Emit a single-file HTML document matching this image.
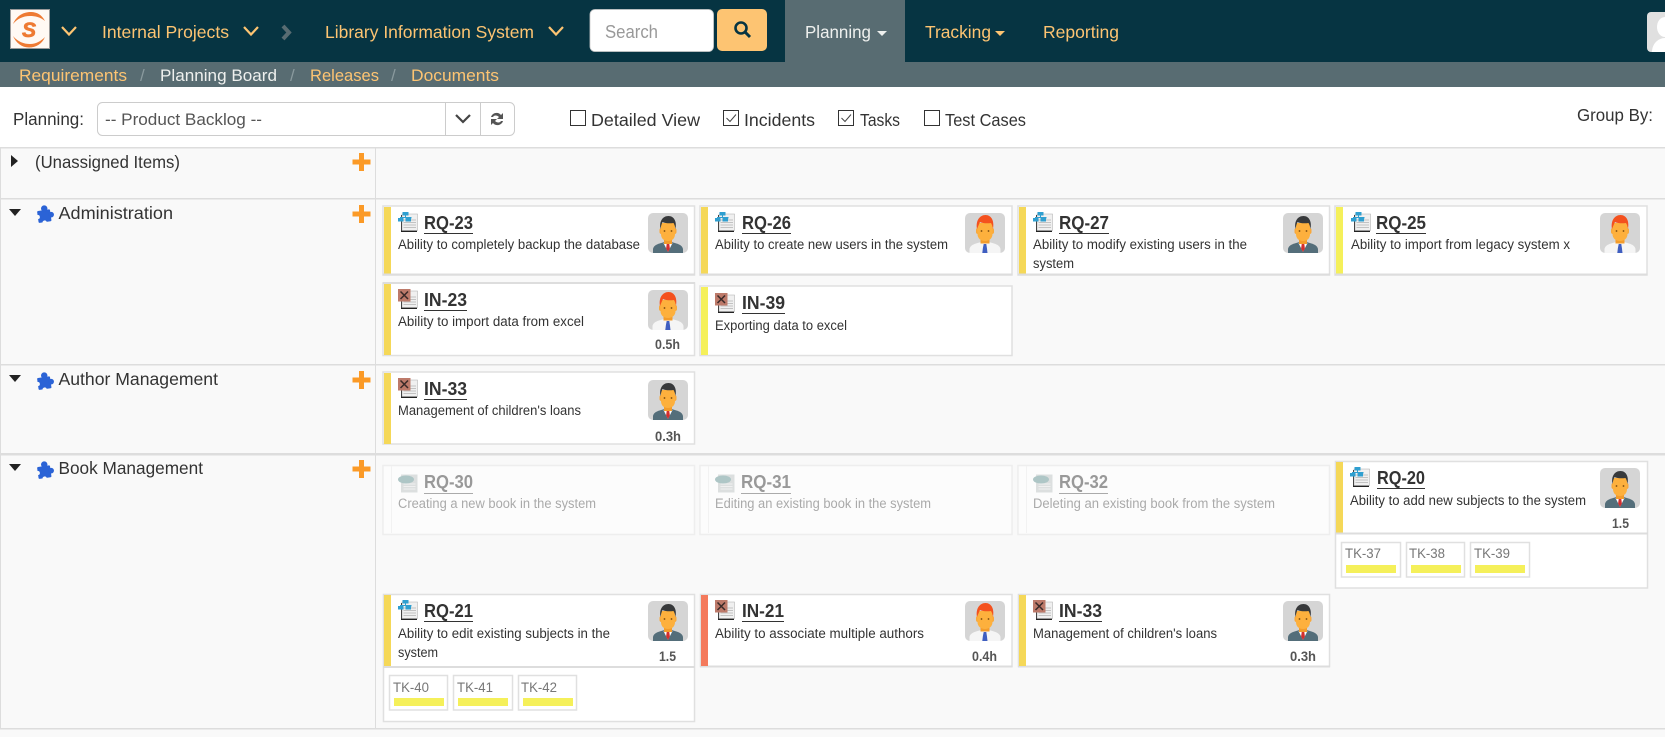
<!DOCTYPE html>
<html lang="en">
<head>
<meta charset="utf-8">
<title>Planning Board</title>
<style>
html,body{margin:0;padding:0;background:#fff;width:1665px;height:737px;overflow:hidden}
svg{display:block}
text{font-family:"Liberation Sans",sans-serif;fill:#333}
.nav{font-size:17.5px;fill:#fdc472}
.sub{font-size:17px;fill:#fdc472}
.lab{font-size:17.5px;fill:#333}
.t{font-size:18px;font-weight:700;fill:#333}
.d{font-size:13.5px;fill:#333}
.e{font-size:13.5px;font-weight:700;fill:#555}
.gt{font-size:18px;font-weight:700;fill:#999}
.gd{font-size:13.5px;fill:#aaa}
.k{font-size:14px;fill:#777}
.c{fill:#fff;stroke:#e0e0e0;stroke-width:1.5}
.g{fill:#fcfcfc;stroke:#eee;stroke-width:1.5}
.b{fill:#ddd}
.u{fill:#333}
.y{fill:#f5d858}
.l{fill:#f5f05a}
</style>
</head>
<body>
<svg width="1665" height="737" viewBox="0 0 1665 737" xmlns="http://www.w3.org/2000/svg">
<defs>
<symbol id="doc" viewBox="0 0 20 20">
<rect x="3" y="3" width="16" height="17" fill="#222"/>
<rect x="4" y="2" width="15.500" height="16.500" fill="#f0f0f0" stroke="#aaa" stroke-width=".5"/>
<path d="M5.500 8h12.500M5.500 10.500h12.500M5.500 13h12.500M5.500 15.500h12.500" stroke="#c2c2c2" stroke-width="1"/>
</symbol>
<symbol id="rq" viewBox="0 0 20 20">
<use href="#doc" width="20" height="20"/>
<path d="M7.500 3v2.500M2.500 6.500V5.500h10.500v1" fill="none" stroke="#2f9fd0" stroke-width="1"/>
<rect x="4.500" y="0" width="6" height="3.500" fill="#2f9fd0"/>
<rect x="0" y="6" width="5.500" height="3.500" fill="#2f9fd0"/>
<rect x="7.500" y="6" width="5.500" height="3.500" fill="#2f9fd0"/>
</symbol>
<symbol id="in" viewBox="0 0 20 20">
<use href="#doc" width="20" height="20"/>
<rect x="0" y="0" width="12.500" height="12.500" fill="#bd7a6a"/>
<path d="M2.500 2.500l7.500 7.500M10 2.500l-7.500 7.500" stroke="#3a2a28" stroke-width="1.500"/>
</symbol>
<symbol id="gh" viewBox="0 0 20 20">
<rect x="3" y="1.500" width="16.500" height="18" fill="#dcdfdf"/>
<path d="M5.500 11h12M5.500 13.500h12M5.500 16h12" stroke="#f0f0f0" stroke-width="1"/>
<ellipse cx="8" cy="6.500" rx="8" ry="4" fill="#aec6c6"/>
</symbol>
<symbol id="m1" viewBox="0 0 40 40">
<rect width="40" height="40" rx="5" fill="#d5d5d5"/>
<path d="M5 40v-3.500c0-3 3-5 6.500-6l5-1.500h7l5 1.500c3.500 1 6.500 3 6.500 6V40z" fill="#546e7a"/>
<path d="M15.500 30l4.500 9 4.500-9z" fill="#fff"/>
<path d="M18.700 31h2.600l.6 4.500-1.900 3.500-1.900-3.500z" fill="#d32f2f"/>
<rect x="16" y="24" width="8" height="7" fill="#f39c2b"/>
<rect x="11.500" y="15" width="17" height="6" rx="2" fill="#f9a83a"/>
<path d="M13 10h14v11c0 4.500-3 7-7 7s-7-2.500-7-7z" fill="#fdb03d"/>
<path d="M12.500 16c-1.500-7.500 2-13 8-13 5.500 0 8.500 5.500 7 13-.4-2.500-1-4.500-2-6-3.500.5-8 .5-11-1-1 2-1.600 4.500-2 7z" fill="#37393b"/>
<circle cx="16.500" cy="18" r=".9" fill="#7a4a10"/><circle cx="23.500" cy="18" r=".9" fill="#7a4a10"/>
</symbol>
<symbol id="m2" viewBox="0 0 40 40">
<rect width="40" height="40" rx="5" fill="#d5d5d5"/>
<path d="M4.500 40v-3.500c0-3 3-5 6.500-6l5-1.500h8l5 1.500c3.500 1 6.500 3 6.500 6V40z" fill="#f5f5f5"/>
<path d="M18.700 31h2.600l.6 4 .6 5h-5.200l.6-5z" fill="#3f5ec0"/>
<rect x="15.500" y="24" width="9" height="6.500" fill="#f39c2b"/>
<rect x="11" y="15" width="18" height="6" rx="2" fill="#f9a83a"/>
<path d="M12.500 10h15v11c0 4.500-3.500 7-7.500 7s-7.500-2.500-7.500-7z" fill="#fdb03d"/>
<path d="M12 16c-1.500-8 2.500-14 8.500-14 6 0 9 6 7.500 14-.4-2.500-1-4.500-2-6-3.500.5-8 .5-11-1-1 2-2 4.500-3 7z" fill="#f4511e"/>
<circle cx="16.500" cy="18" r=".9" fill="#7a4a10"/><circle cx="23.500" cy="18" r=".9" fill="#7a4a10"/>
</symbol>
<symbol id="pz" viewBox="0 0 18 18">
<g transform="rotate(-8 9 9)">
<rect x="1.500" y="5" width="13" height="12" rx="1" fill="#2b63d6"/>
<circle cx="9" cy="3.500" r="3.200" fill="#2b63d6"/>
<circle cx="15" cy="10.500" r="2.800" fill="#2b63d6"/>
<circle cx="1.500" cy="11" r="2" fill="#f9f9f9"/>
<circle cx="7.500" cy="17.500" r="2.200" fill="#f9f9f9"/>
</g>
</symbol>
<symbol id="plus" viewBox="0 0 18 18">
<path d="M6.500 0h5v6.500H18v5h-6.500V18h-5v-6.500H0v-5h6.500z" fill="#fb9a27"/>
</symbol>
</defs>

<!-- header -->
<rect width="1665" height="62" fill="#063442"/>
<rect y="62" width="1665" height="25" fill="#586c72"/>
<rect x="785" width="120" height="62" fill="#586c72"/>

<rect x="10.500" y="9.500" width="39" height="39" fill="#fff9f4" stroke="#999" stroke-width="1"/>
<path d="M13 24C17 15 24 12 31 12C37 12 42 15 45 21C40 17 35 16 30 16C23 16 17 19 13 24z" fill="#ee7a33"/>
<path d="M13 36C18 42 24 44 30 44C36 44 41 41 45 37C42 44 36 47.500 29 47.500C22 47.500 16 43 13 36z" fill="#ee7a33"/>
<text x="22" y="37" style="font-size:21px;font-weight:700;font-style:italic;fill:#ee7a33;stroke:#ee7a33;stroke-width:.7">S</text>
<path d="M62 27l7 7.500 7-7.500" fill="none" stroke="#fdc472" stroke-width="2.200"/>

<text class="nav" x="102" y="38" textLength="127" lengthAdjust="spacingAndGlyphs">Internal Projects</text>
<path d="M244 27l7 7.500 7-7.500" fill="none" stroke="#fdc472" stroke-width="2.200"/>
<path d="M283 26l6 6.500-6 6.500" fill="none" stroke="#586c72" stroke-width="4"/>
<text class="nav" x="325" y="38" textLength="209" lengthAdjust="spacingAndGlyphs">Library Information System</text>
<path d="M549 27l7 7.500 7-7.500" fill="none" stroke="#fdc472" stroke-width="2.200"/>

<rect x="590" y="9.500" width="123.500" height="42" rx="5" fill="#fff" stroke="#ccc" stroke-width=".8"/>
<text x="605" y="38" textLength="53" lengthAdjust="spacingAndGlyphs" style="font-size:18px;fill:#999">Search</text>
<rect x="717" y="9" width="50" height="42" rx="5" fill="#fdc472"/>
<circle cx="741" cy="28" r="5.500" fill="none" stroke="#063442" stroke-width="2.600"/>
<path d="M745 32l5 5" stroke="#063442" stroke-width="3"/>

<text x="805" y="38" textLength="66" lengthAdjust="spacingAndGlyphs" style="font-size:17.5px;fill:#eef0ee">Planning</text>
<path d="M877 31h10l-5 5z" fill="#eef0ee"/>
<text class="nav" x="925" y="38" textLength="66" lengthAdjust="spacingAndGlyphs">Tracking</text>
<path d="M995 31h10l-5 5z" fill="#fdc472"/>
<text class="nav" x="1043" y="38" textLength="76" lengthAdjust="spacingAndGlyphs">Reporting</text>

<rect x="1647" y="12" width="30" height="40" rx="4" fill="#e0e0e0"/>
<ellipse cx="1665" cy="27" rx="8" ry="10" fill="#fff"/>
<path d="M1652 52c0-8 6-14 13-14v14z" fill="#fff"/>

<!-- subnav -->
<text class="sub" x="19" y="81" textLength="108" lengthAdjust="spacingAndGlyphs">Requirements</text>
<text x="140" y="81" style="font-size:17px;fill:#8a9a9e">/</text>
<text x="160" y="81" textLength="117" lengthAdjust="spacingAndGlyphs" style="font-size:17px;fill:#eef0ee">Planning Board</text>
<text x="290" y="81" style="font-size:17px;fill:#8a9a9e">/</text>
<text class="sub" x="310" y="81" textLength="69" lengthAdjust="spacingAndGlyphs">Releases</text>
<text x="391" y="81" style="font-size:17px;fill:#8a9a9e">/</text>
<text class="sub" x="411" y="81" textLength="88" lengthAdjust="spacingAndGlyphs">Documents</text>

<!-- toolbar -->
<text class="lab" x="13" y="125" textLength="71" lengthAdjust="spacingAndGlyphs">Planning:</text>
<rect x="97.500" y="102.500" width="417" height="33" rx="5" fill="#fff" stroke="#ccc"/>
<path d="M445.500 103v32M480.500 103v32" stroke="#ccc"/>
<text x="105" y="125" textLength="157" lengthAdjust="spacingAndGlyphs" style="font-size:17px;fill:#555">-- Product Backlog --</text>
<path d="M456 115l7 7 7-7" fill="none" stroke="#444" stroke-width="2.200"/>
<path d="M491 117c1-4 7-6 10-2l2-2v6h-6l2-2c-2-2-5-2-6 0zM503 121c-1 4-7 6-10 2l-2 2v-6h6l-2 2c2 2 5 2 6 0z" fill="#555"/>

<rect x="570.500" y="110.500" width="15" height="15" fill="#fff" stroke="#333"/>
<text class="lab" x="591" y="126" textLength="109" lengthAdjust="spacingAndGlyphs">Detailed View</text>
<rect x="723.500" y="110.500" width="15" height="15" fill="#fff" stroke="#333"/>
<path d="M726.500 118l3.500 3.500 6-7" fill="none" stroke="#444" stroke-width="1"/>
<text class="lab" x="744" y="126" textLength="71" lengthAdjust="spacingAndGlyphs">Incidents</text>
<rect x="838.500" y="110.500" width="15" height="15" fill="#fff" stroke="#333"/>
<path d="M841.500 118l3.500 3.500 6-7" fill="none" stroke="#444" stroke-width="1"/>
<text class="lab" x="860" y="126" textLength="40" lengthAdjust="spacingAndGlyphs">Tasks</text>
<rect x="924.500" y="110.500" width="15" height="15" fill="#fff" stroke="#333"/>
<text class="lab" x="945" y="126" textLength="81" lengthAdjust="spacingAndGlyphs">Test Cases</text>
<text class="lab" x="1577" y="121" textLength="76" lengthAdjust="spacingAndGlyphs">Group By:</text>

<!-- table -->
<rect y="147" width="1665" height="590" fill="#f9f9f9"/>
<rect y="147" width="1665" height="1.500" class="b"/>
<rect y="198" width="1665" height="1.500" class="b"/>
<rect y="364" width="1665" height="1.500" class="b"/>
<rect y="453" width="1665" height="2.500" class="b"/>
<rect y="728" width="1665" height="1.500" class="b"/>
<rect x="0" y="147" width="1" height="582" class="b"/>
<rect x="375" y="147" width="1" height="582" class="b"/>

<path d="M11 155l7 6-7 6z" fill="#222"/>
<text class="lab" x="35" y="168" textLength="145" lengthAdjust="spacingAndGlyphs">(Unassigned Items)</text>
<use href="#plus" x="352.500" y="153" width="18" height="18"/>

<path d="M9 209h12l-6 7z" fill="#222"/>
<use href="#pz" x="36" y="205" width="18" height="18"/>
<text class="lab" x="58.500" y="219" textLength="114.500" lengthAdjust="spacingAndGlyphs">Administration</text>
<use href="#plus" x="352.500" y="205" width="18" height="18"/>

<path d="M9 375h12l-6 7z" fill="#222"/>
<use href="#pz" x="36" y="372" width="18" height="18"/>
<text class="lab" x="58.500" y="385" textLength="159.500" lengthAdjust="spacingAndGlyphs">Author Management</text>
<use href="#plus" x="352.500" y="371" width="18" height="18"/>

<path d="M9 464h12l-6 7z" fill="#222"/>
<use href="#pz" x="36" y="461" width="18" height="18"/>
<text class="lab" x="58.500" y="474" textLength="144.500" lengthAdjust="spacingAndGlyphs">Book Management</text>
<use href="#plus" x="352.500" y="460" width="18" height="18"/>

<!-- RQ-23 -->
<rect class="c" x="383" y="206" width="311.500" height="69"/><rect class="b" x="383" y="273.500" width="312" height="2"/>
<rect class="y" x="384" y="207" width="7" height="66.500"/>
<use href="#rq" x="398" y="212" width="20" height="20"/>
<text class="t" x="424" y="229" textLength="49" lengthAdjust="spacingAndGlyphs">RQ-23</text><rect class="u" x="424" y="233" width="49" height="1"/>
<text class="d" x="398" y="249" textLength="242" lengthAdjust="spacingAndGlyphs">Ability to completely backup the database</text>
<use href="#m1" x="648" y="213" width="40" height="40"/>

<!-- RQ-26 -->
<rect class="c" x="700" y="206" width="312" height="69"/><rect class="b" x="700" y="273.500" width="312.500" height="2"/>
<rect class="y" x="701" y="207" width="7" height="66.500"/>
<use href="#rq" x="715" y="212" width="20" height="20"/>
<text class="t" x="742" y="229" textLength="49" lengthAdjust="spacingAndGlyphs">RQ-26</text><rect class="u" x="742" y="233" width="49" height="1"/>
<text class="d" x="715" y="249" textLength="233" lengthAdjust="spacingAndGlyphs">Ability to create new users in the system</text>
<use href="#m2" x="965" y="213" width="40" height="40"/>

<!-- RQ-27 -->
<rect class="c" x="1018" y="206" width="311.500" height="69"/><rect class="b" x="1018" y="273.500" width="312" height="2"/>
<rect class="y" x="1019" y="207" width="7" height="66.500"/>
<use href="#rq" x="1033" y="212" width="20" height="20"/>
<text class="t" x="1059" y="229" textLength="50" lengthAdjust="spacingAndGlyphs">RQ-27</text><rect class="u" x="1059" y="233" width="50" height="1"/>
<text class="d" x="1033" y="249" textLength="214" lengthAdjust="spacingAndGlyphs">Ability to modify existing users in the</text>
<text class="d" x="1033" y="268" textLength="41" lengthAdjust="spacingAndGlyphs">system</text>
<use href="#m1" x="1283" y="213" width="40" height="40"/>

<!-- RQ-25 -->
<rect class="c" x="1335" y="206" width="312" height="69"/><rect class="b" x="1335" y="273.500" width="312.500" height="2"/>
<rect class="l" x="1336" y="207" width="7" height="66.500"/>
<use href="#rq" x="1351" y="212" width="20" height="20"/>
<text class="t" x="1376" y="229" textLength="50" lengthAdjust="spacingAndGlyphs">RQ-25</text><rect class="u" x="1376" y="233" width="50" height="1"/>
<text class="d" x="1351" y="249" textLength="219" lengthAdjust="spacingAndGlyphs">Ability to import from legacy system x</text>
<use href="#m2" x="1600" y="213" width="40" height="40"/>

<!-- IN-23 -->
<rect class="c" x="383" y="283" width="311.500" height="72.500"/><rect class="b" x="383" y="282" width="312" height="2"/>
<rect class="y" x="384" y="284" width="7" height="71"/>
<use href="#in" x="398" y="289" width="20" height="20"/>
<text class="t" x="424" y="306" textLength="43" lengthAdjust="spacingAndGlyphs">IN-23</text><rect class="u" x="424" y="310" width="43" height="1"/>
<text class="d" x="398" y="326" textLength="186" lengthAdjust="spacingAndGlyphs">Ability to import data from excel</text>
<use href="#m2" x="648" y="290" width="40" height="40"/>
<text class="e" x="655" y="349" textLength="25" lengthAdjust="spacingAndGlyphs">0.5h</text>

<!-- IN-39 -->
<rect class="c" x="700" y="286" width="312" height="69.500"/>
<rect class="l" x="701" y="287" width="7" height="68"/>
<use href="#in" x="715" y="293" width="20" height="20"/>
<text class="t" x="742" y="309" textLength="43" lengthAdjust="spacingAndGlyphs">IN-39</text><rect class="u" x="742" y="313" width="43" height="1"/>
<text class="d" x="715" y="330" textLength="132" lengthAdjust="spacingAndGlyphs">Exporting data to excel</text>

<!-- IN-33 author -->
<rect class="c" x="383" y="372" width="311.500" height="72"/>
<rect class="y" x="384" y="373" width="7" height="71"/>
<use href="#in" x="398" y="378" width="20" height="20"/>
<text class="t" x="424" y="395" textLength="43" lengthAdjust="spacingAndGlyphs">IN-33</text><rect class="u" x="424" y="399" width="43" height="1"/>
<text class="d" x="398" y="415" textLength="183" lengthAdjust="spacingAndGlyphs">Management of children's loans</text>
<use href="#m1" x="648" y="380" width="40" height="40"/>
<text class="e" x="655" y="441" textLength="26" lengthAdjust="spacingAndGlyphs">0.3h</text>

<!-- ghosts -->
<rect class="g" x="383" y="465.500" width="311.500" height="69"/><rect x="391" y="466" width="1" height="67" fill="#f2f2f2"/>
<use href="#gh" x="398" y="473" width="20" height="20"/>
<text class="gt" x="424" y="488" textLength="49" lengthAdjust="spacingAndGlyphs">RQ-30</text><rect x="424" y="493" width="49" height="1" fill="#aaa"/>
<text class="gd" x="398" y="508" textLength="198" lengthAdjust="spacingAndGlyphs">Creating a new book in the system</text>

<rect class="g" x="700" y="465.500" width="312" height="69"/><rect x="708" y="466" width="1" height="67" fill="#f2f2f2"/>
<use href="#gh" x="715" y="473" width="20" height="20"/>
<text class="gt" x="741" y="488" textLength="50" lengthAdjust="spacingAndGlyphs">RQ-31</text><rect x="741" y="493" width="50" height="1" fill="#aaa"/>
<text class="gd" x="715" y="508" textLength="216" lengthAdjust="spacingAndGlyphs">Editing an existing book in the system</text>

<rect class="g" x="1018" y="465.500" width="311.500" height="69"/><rect x="1026" y="466" width="1" height="67" fill="#f2f2f2"/>
<use href="#gh" x="1033" y="473" width="20" height="20"/>
<text class="gt" x="1059" y="488" textLength="49" lengthAdjust="spacingAndGlyphs">RQ-32</text><rect x="1059" y="493" width="49" height="1" fill="#aaa"/>
<text class="gd" x="1033" y="508" textLength="242" lengthAdjust="spacingAndGlyphs">Deleting an existing book from the system</text>

<!-- RQ-20 -->
<rect class="c" x="1335.500" y="461.500" width="312" height="126.500"/>
<rect class="b" x="1335" y="532.500" width="313" height="2"/>
<rect class="y" x="1336" y="462" width="7" height="70.500"/>
<use href="#rq" x="1350" y="467" width="20" height="20"/>
<text class="t" x="1377" y="484" textLength="48" lengthAdjust="spacingAndGlyphs">RQ-20</text><rect class="u" x="1377" y="488" width="48" height="1"/>
<text class="d" x="1350" y="505" textLength="236" lengthAdjust="spacingAndGlyphs">Ability to add new subjects to the system</text>
<use href="#m1" x="1600" y="468" width="40" height="40"/>
<text class="e" x="1612" y="528" textLength="17" lengthAdjust="spacingAndGlyphs">1.5</text>
<rect class="c" x="1341.500" y="542.500" width="59" height="34.500"/>
<rect class="c" x="1406.500" y="542.500" width="58" height="34.500"/>
<rect class="c" x="1470.500" y="542.500" width="59" height="34.500"/>
<text class="k" x="1345" y="558" textLength="36" lengthAdjust="spacingAndGlyphs">TK-37</text>
<text class="k" x="1409" y="558" textLength="36" lengthAdjust="spacingAndGlyphs">TK-38</text>
<text class="k" x="1474" y="558" textLength="36" lengthAdjust="spacingAndGlyphs">TK-39</text>
<rect class="l" x="1346" y="565" width="50" height="8"/>
<rect class="l" x="1411" y="565" width="50" height="8"/>
<rect class="l" x="1475" y="565" width="50" height="8"/>

<!-- RQ-21 -->
<rect class="c" x="383.500" y="594.500" width="311" height="127"/>
<rect class="b" x="383" y="666" width="312" height="2"/>
<rect class="y" x="384" y="595" width="7" height="71"/>
<use href="#rq" x="398" y="600" width="20" height="20"/>
<text class="t" x="424" y="617" textLength="49" lengthAdjust="spacingAndGlyphs">RQ-21</text><rect class="u" x="424" y="621" width="49" height="1"/>
<text class="d" x="398" y="638" textLength="212" lengthAdjust="spacingAndGlyphs">Ability to edit existing subjects in the</text>
<text class="d" x="398" y="657" textLength="40" lengthAdjust="spacingAndGlyphs">system</text>
<use href="#m1" x="648" y="601" width="40" height="40"/>
<text class="e" x="659" y="661" textLength="17" lengthAdjust="spacingAndGlyphs">1.5</text>
<rect class="c" x="389.500" y="675.500" width="58" height="34.500"/>
<rect class="c" x="453.500" y="675.500" width="59" height="34.500"/>
<rect class="c" x="518.500" y="675.500" width="58" height="34.500"/>
<text class="k" x="393" y="692" textLength="36" lengthAdjust="spacingAndGlyphs">TK-40</text>
<text class="k" x="457" y="692" textLength="36" lengthAdjust="spacingAndGlyphs">TK-41</text>
<text class="k" x="521" y="692" textLength="36" lengthAdjust="spacingAndGlyphs">TK-42</text>
<rect class="l" x="394" y="698" width="50" height="8"/>
<rect class="l" x="458" y="698" width="50" height="8"/>
<rect class="l" x="523" y="698" width="50" height="8"/>

<!-- IN-21 -->
<rect class="c" x="700.500" y="594.500" width="311.500" height="72"/><rect class="b" x="700" y="665.500" width="312.500" height="2"/>
<rect x="701" y="595" width="7" height="71" fill="#f47a5c"/>
<use href="#in" x="715" y="600" width="20" height="20"/>
<text class="t" x="742" y="617" textLength="42" lengthAdjust="spacingAndGlyphs">IN-21</text><rect class="u" x="742" y="621" width="42" height="1"/>
<text class="d" x="715" y="638" textLength="209" lengthAdjust="spacingAndGlyphs">Ability to associate multiple authors</text>
<use href="#m2" x="965" y="601" width="40" height="40"/>
<text class="e" x="972" y="661" textLength="25" lengthAdjust="spacingAndGlyphs">0.4h</text>

<!-- IN-33 book -->
<rect class="c" x="1018.500" y="594.500" width="311" height="72"/><rect class="b" x="1018" y="665.500" width="312" height="2"/>
<rect class="y" x="1019" y="595" width="7" height="71"/>
<use href="#in" x="1033" y="600" width="20" height="20"/>
<text class="t" x="1059" y="617" textLength="43" lengthAdjust="spacingAndGlyphs">IN-33</text><rect class="u" x="1059" y="621" width="43" height="1"/>
<text class="d" x="1033" y="638" textLength="184" lengthAdjust="spacingAndGlyphs">Management of children's loans</text>
<use href="#m1" x="1283" y="601" width="40" height="40"/>
<text class="e" x="1290" y="661" textLength="26" lengthAdjust="spacingAndGlyphs">0.3h</text>
</svg>
</body>
</html>
